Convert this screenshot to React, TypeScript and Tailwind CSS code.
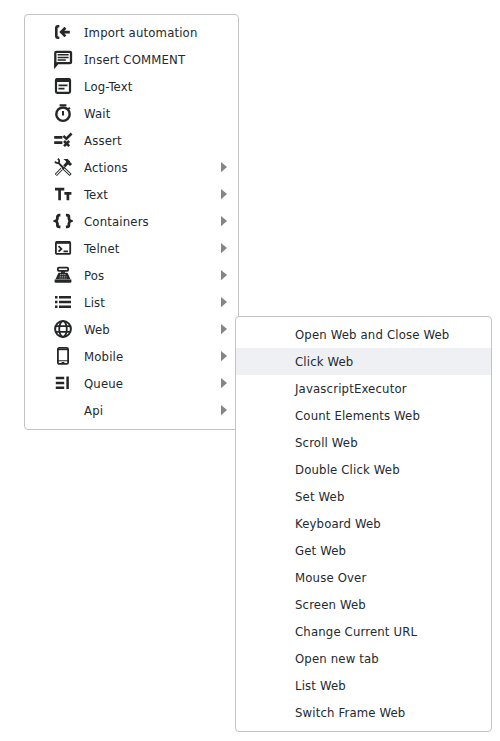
import type { ReactNode } from 'react';

const solid = { fill: 'currentColor', stroke: 'none' };

const icons: Record<string, ReactNode> = {
  import: (
    <>
      <path d="M6.3 7.2H5Q3.3 7.2 3.3 9v8q0 1.7 1.7 1.7h1.3" strokeWidth="2.6" />
      <path d="M16.8 13.1H8.5M12.4 8.8l-4.2 4.3 4.2 4.3" strokeWidth="2.7" />
    </>
  ),
  comment: (
    <>
      <path d="M2.3 20V6.8Q2.3 5.8 3.3 5.8H17q1 0 1 1v9.4q0 1-1 1H4.5Z" strokeWidth="2.3" />
      <path d="M1.2 16v6.2l4-4.7Z" {...solid} />
      <path d="M4.6 8.8h11M4.6 11.4h11M4.6 14h8.2" strokeWidth="1.5" />
    </>
  ),
  log: (
    <>
      <rect x="3" y="6" width="14" height="13.8" rx="1.2" strokeWidth="2.2" />
      <path d="M3 7.3h14" strokeWidth="3.4" />
      <path d="M5.5 12.4h9M5.5 15.6h6" strokeWidth="1.8" />
    </>
  ),
  wait: (
    <>
      <circle cx="10" cy="14.2" r="6.7" strokeWidth="2.4" />
      <path d="M6.6 5.3h6.8M10 11v4.6M15 9.4l1.8-1.8" strokeWidth="2" />
    </>
  ),
  assert: (
    <>
      <path d="M1.2 10.4h8.2M1.2 15.7h8.2" strokeWidth="2.7" />
      <path d="M10.4 8.8l3 2.9L18.6 6.5M11 14l5.2 5.2M16.2 14L11 19.2" strokeWidth="2.5" />
    </>
  ),
  actions: (
    <>
      <path d="M2.8 21L13.7 9.8" strokeWidth="3" />
      <path d="M3.2 20.6l7.8-8" stroke="white" strokeWidth="1.1" />
      <path d="M6.5 10l10.2 10.4" stroke="white" strokeWidth="3.4" />
      <path d="M5.2 8.6L10.4 14" strokeWidth="1.9" />
      <path d="M10 13.6l7.6 7.4" strokeWidth="3" />
      <path d="M11.2 14.8l5.8 5.6" stroke="white" strokeWidth="1.1" />
      <path d="M4.8 4.8q2.4 1.8.9 3.7Q3.9 10 2 7.6" strokeWidth="1.7" />
      <path d="M10.4 5h4.3l2.2 2.2.5 1.3 1.7 1.5-2.1 2.1-1.8-1.6-1 .5-1.6-1.6.5-2.1Z" {...solid} />
    </>
  ),
  text: <path d="M2 8.2h9.3M6.6 8.2v11M11.4 12.4h7M14.9 12.4v6.8" strokeWidth="2.7" />,
  containers: (
    <path d="M7.4 7.2H6.3Q4.4 7.2 4.4 9v1.5q0 1.5-1.9 2.5 1.9 1 1.9 2.5V17q0 1.9 1.9 1.9h1.1M12.9 7.2H14q1.9 0 1.9 1.8v1.5q0 1.5 1.9 2.5-1.9 1-1.9 2.5V17q0 1.9-1.9 1.9h-1.1" strokeWidth="2.8" />
  ),
  telnet: (
    <>
      <rect x="2.9" y="6.9" width="14.3" height="12" rx="1" strokeWidth="1.8" />
      <path d="M3 7.5h14" strokeWidth="2.6" />
      <path d="M5.6 11.1l2.8 2.8-2.8 2.8M10.5 16.4h4.4" strokeWidth="1.8" />
    </>
  ),
  pos: (
    <>
      <rect x="4.9" y="5.7" width="10.2" height="3.2" rx="0.8" strokeWidth="1.8" />
      <path d="M8 10h4" strokeWidth="1.8" />
      <path d="M6 10.8h8q.7 0 1 .9l2.5 5.5h-15L5 11.7q.3-.9 1-.9Z" {...solid} />
      <path d="M7 12.5h6M6.7 14.3h6.7M6.4 16h7.3" stroke="white" strokeWidth="0.55" strokeDasharray="1.4 .7" />
      <path d="M1.6 17.5h16.8v2.3q0 1-1 1H2.6q-1 0-1-1Z" {...solid} />
    </>
  ),
  list: (
    <path d="M2 8.3h2.5M6 8.3h12M2 13h2.5M6 13h12M2 17.7h2.5M6 17.7h12" strokeWidth="2.5" />
  ),
  web: (
    <>
      <circle cx="10" cy="13" r="7.9" strokeWidth="2" />
      <ellipse cx="10" cy="13" rx="3.8" ry="7.8" strokeWidth="1.8" />
      <path d="M3 10.2h14M3 15.8h14" strokeWidth="1.8" />
    </>
  ),
  mobile: (
    <>
      <rect x="4.9" y="4.9" width="10.2" height="16" rx="1.4" strokeWidth="1.8" />
      <path d="M5 6.5h10" strokeWidth="1.4" />
      <path d="M5 17.7h10M8.6 19.5h2.8" strokeWidth="1.1" />
    </>
  ),
  queue: (
    <path d="M2.8 8h8.4M2.8 12.9h8.4M2.8 17.8h8.4M14.6 6.6v12.4" strokeWidth="2.5" />
  ),
};

const mainItems: { label: string; icon?: string; sub?: boolean }[] = [
  { label: 'Import automation', icon: 'import' },
  { label: 'Insert COMMENT', icon: 'comment' },
  { label: 'Log-Text', icon: 'log' },
  { label: 'Wait', icon: 'wait' },
  { label: 'Assert', icon: 'assert' },
  { label: 'Actions', icon: 'actions', sub: true },
  { label: 'Text', icon: 'text', sub: true },
  { label: 'Containers', icon: 'containers', sub: true },
  { label: 'Telnet', icon: 'telnet', sub: true },
  { label: 'Pos', icon: 'pos', sub: true },
  { label: 'List', icon: 'list', sub: true },
  { label: 'Web', icon: 'web', sub: true },
  { label: 'Mobile', icon: 'mobile', sub: true },
  { label: 'Queue', icon: 'queue', sub: true },
  { label: 'Api', sub: true },
];

const webItems = [
  'Open Web and Close Web',
  'Click Web',
  'JavascriptExecutor',
  'Count Elements Web',
  'Scroll Web',
  'Double Click Web',
  'Set Web',
  'Keyboard Web',
  'Get Web',
  'Mouse Over',
  'Screen Web',
  'Change Current URL',
  'Open new tab',
  'List Web',
  'Switch Frame Web',
];

export default function App() {
  return (
    <div className="relative h-[741px] w-[500px] overflow-hidden bg-white pt-3.5 pl-6 font-['DejaVu_Sans_Condensed','DejaVu_Sans',sans-serif] [font-stretch:condensed] text-[13px] leading-[27px] tracking-[0.16px] text-[#24292e]">
      <ul className="w-[215px] rounded-[4px] border border-[#c3c4c7] bg-white pt-1 pb-[5px]">
        {mainItems.map(({ label, icon, sub }) => (
          <li key={label} className="flex h-[27px] items-center pl-7 pr-[11px]">
            <svg className="mr-[11px] h-[27px] w-5 shrink-0 text-[#242627]" viewBox="0 0 20 27" fill="none" stroke="currentColor">
              {icon && icons[icon]}
            </svg>
            <span className={label.startsWith('I') ? "flex-1 whitespace-nowrap first-letter:font-['Noto_Sans']" : 'flex-1 whitespace-nowrap'}>
              {label}
            </span>
            {sub && (
              <svg className="h-[27px] w-1.5 text-[#858585]" viewBox="0 0 6 27" fill="currentColor">
                <path d="M0 8v10.2l6-5.1Z" />
              </svg>
            )}
          </li>
        ))}
      </ul>
      <ul className="absolute top-[316px] left-[235px] w-[257px] rounded-[4px] border border-[#c3c4c7] bg-white pt-1 pb-[5px]">
        {webItems.map((label) => (
          <li key={label} className={label === 'Click Web' ? 'h-[27px] bg-[#eff0f4] pl-[59px]' : 'h-[27px] pl-[59px]'}>
            {label}
          </li>
        ))}
      </ul>
    </div>
  );
}
